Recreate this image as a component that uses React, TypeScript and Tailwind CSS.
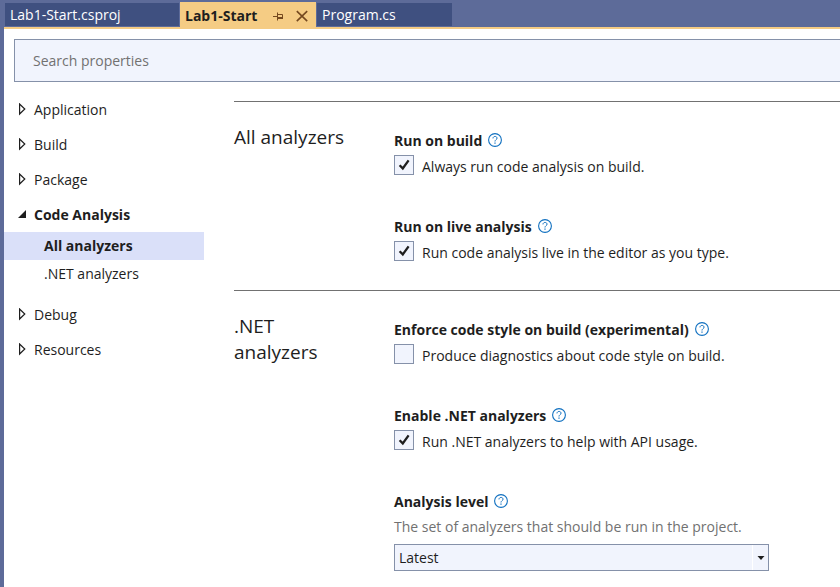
import { useState, type ReactNode } from "react";

function PinIcon() {
  return (
    <svg viewBox="0 0 12 12" className="h-3 w-3" fill="none" stroke="#75491f" aria-hidden="true">
      <path d="M1 6.5h4M5.5 2.5v8M5.5 4.5h5v4" />
      <path d="M5.5 8h5.5" strokeWidth="2" />
    </svg>
  );
}

function CloseIcon() {
  return (
    <svg viewBox="0 0 12 12" className="h-3 w-3" fill="none" stroke="#75491f" strokeWidth="1.6" aria-hidden="true">
      <path d="M0.8 1.2l10.4 10M11.2 1.2L0.8 11.2" />
    </svg>
  );
}

function HelpIcon() {
  return (
    <svg viewBox="0 0 14 14" className="h-3.5 w-3.5" fill="none" stroke="#1070c0" aria-hidden="true">
      <circle cx="7" cy="7" r="6.4" strokeWidth="1.1" />
      <path d="M5 5.4c0-2.6 4-2.6 4-.2C9 6.7 7 6.7 7 8.5" strokeWidth="1" />
      <path d="M7 9.5v1.3" strokeWidth="1.2" />
    </svg>
  );
}

function Arrow({ open }: { open?: boolean }) {
  return (
    <svg viewBox="0 0 9 14" className="h-3.5 w-[9px]" aria-hidden="true">
      {open ? (
        <path d="M8 2v8H0z" fill="#1e1e1e" />
      ) : (
        <path d="M1.6 1v10L6.8 6z" fill="none" stroke="#1e1e1e" strokeWidth="1.2" />
      )}
    </svg>
  );
}

function NavGroup({ label, open, children }: { label: string; open?: boolean; children?: ReactNode }) {
  return (
    <li>
      <button
        type="button"
        aria-expanded={!!open}
        className={`flex h-[35px] w-full items-center gap-[7px] pl-3.5 text-left ${open ? "font-bold" : ""}`}
      >
        <Arrow open={open} />
        <span>{label}</span>
      </button>
      {children}
    </li>
  );
}

function FieldTitle({ id, children }: { id: string; children: ReactNode }) {
  return (
    <div className="flex h-5 items-center gap-1.5">
      <h3 id={id} className="font-bold">{children}</h3>
      <button type="button" aria-label="Help" className="pb-0.5">
        <HelpIcon />
      </button>
    </div>
  );
}

function CheckField({ id, title, label, initial }: { id: string; title: string; label: string; initial: boolean }) {
  const [checked, setChecked] = useState(initial);
  return (
    <div>
      <FieldTitle id={`${id}-title`}>{title}</FieldTitle>
      <label htmlFor={id} className="mt-1 flex items-start gap-2">
        <span className="grid shrink-0">
          <input
            id={id}
            type="checkbox"
            checked={checked}
            onChange={(e) => setChecked(e.target.checked)}
            className="col-start-1 row-start-1 h-5 w-5 appearance-none border border-[#8591a9] bg-[#f1f4fd]"
          />
          {checked && (
            <svg viewBox="0 0 20 20" className="pointer-events-none col-start-1 row-start-1 h-5 w-5" aria-hidden="true">
              <path d="M5.6 10.2L8.8 13.4L14.6 5.4" fill="none" stroke="#1e1e1e" strokeWidth="2.3" />
            </svg>
          )}
        </span>
        <span className="pt-0.5">{label}</span>
      </label>
    </div>
  );
}

function Section({ title, children }: { title: string; children: ReactNode }) {
  return (
    <section className="flex border-t border-[#717171] pb-[27px] pt-[29px]">
      <h2 className="-mt-[7px] w-[160px] shrink-0 pr-10 text-[19px] leading-[26px]">{title}</h2>
      <div className="flex min-w-0 flex-1 flex-col gap-10">{children}</div>
    </section>
  );
}

export default function App() {
  return (
    <div className="flex min-h-screen flex-col bg-[#5d6b99] font-['Open_Sans','Noto_Sans',sans-serif] text-[14px] leading-5 text-[#1e1e1e]">
      <div role="tablist" className="flex h-[27px] items-stretch pl-[5px] pt-0.5 text-white">
        <button type="button" role="tab" aria-selected="false" className="mb-px mt-px w-[174px] bg-[#3f5080] px-[5px] text-left">
          Lab1-Start.csproj
        </button>
        <div className="ml-px flex w-[136px] items-center bg-[#f5cc84] pl-[5px] pr-2 pt-0.5 text-[#1e1e1e]">
          <button type="button" role="tab" aria-selected="true" className="flex-1 whitespace-nowrap text-left font-bold">
            Lab1-Start
          </button>
          <button type="button" aria-label="Pin tab" className="mr-3">
            <PinIcon />
          </button>
          <button type="button" aria-label="Close tab">
            <CloseIcon />
          </button>
        </div>
        <button type="button" role="tab" aria-selected="false" className="mb-px ml-px mt-px w-[135px] bg-[#3f5080] px-[5px] text-left">
          Program.cs
        </button>
      </div>

      <div className="ml-1 flex flex-1 flex-col border-t-2 border-[#f5cc84] bg-white">
        <input
          type="text"
          aria-label="Search properties"
          placeholder="Search properties"
          className="ml-2.5 mt-2.5 h-[43px] border border-r-0 border-[#8591a9] bg-[#f1f4fd] px-[18px] placeholder:text-[#717171] placeholder:opacity-100"
        />
        <div className="flex flex-1">
          <nav aria-label="Property pages" className="w-[200px] shrink-0 pt-2.5">
            <ul>
              <NavGroup label="Application" />
              <NavGroup label="Build" />
              <NavGroup label="Package" />
              <NavGroup label="Code Analysis" open>
                <ul className="mb-[9px]">
                  <li>
                    <a href="#all" aria-current="page" className="flex h-7 items-center bg-[#dae0f9] pl-10 font-bold">
                      All analyzers
                    </a>
                  </li>
                  <li>
                    <a href="#net" className="flex h-7 items-center pl-10">
                      .NET analyzers
                    </a>
                  </li>
                </ul>
              </NavGroup>
              <NavGroup label="Debug" />
              <NavGroup label="Resources" />
            </ul>
          </nav>

          <main className="ml-[30px] min-w-0 flex-1 pt-[19px]">
            <Section title="All analyzers">
              <CheckField id="run-build" title="Run on build" label="Always run code analysis on build." initial />
              <CheckField
                id="run-live"
                title="Run on live analysis"
                label="Run code analysis live in the editor as you type."
                initial
              />
            </Section>
            <Section title=".NET analyzers">
              <CheckField
                id="enforce"
                title="Enforce code style on build (experimental)"
                label="Produce diagnostics about code style on build."
                initial={false}
              />
              <CheckField
                id="enable-net"
                title="Enable .NET analyzers"
                label="Run .NET analyzers to help with API usage."
                initial
              />
              <div className="-mb-4">
                <FieldTitle id="level-title">Analysis level</FieldTitle>
                <p className="mt-[5px] text-[#717171]">The set of analyzers that should be run in the project.</p>
                <div className="mt-[7px] grid max-w-[375px]">
                  <select
                    aria-labelledby="level-title"
                    className="col-start-1 row-start-1 h-[27px] w-full appearance-none border border-[#8591a9] bg-[#f1f4fd] px-1 pt-px"
                  >
                    <option>Latest</option>
                  </select>
                  <span className="pointer-events-none col-start-1 row-start-1 my-px mr-px flex w-4 items-center justify-center justify-self-end border-l border-white">
                    <svg viewBox="0 0 8 4" className="h-1 w-2" aria-hidden="true">
                      <path d="M0.5 0h7L4 4z" fill="#1e1e1e" />
                    </svg>
                  </span>
                </div>
              </div>
            </Section>
          </main>
        </div>
      </div>
    </div>
  );
}
